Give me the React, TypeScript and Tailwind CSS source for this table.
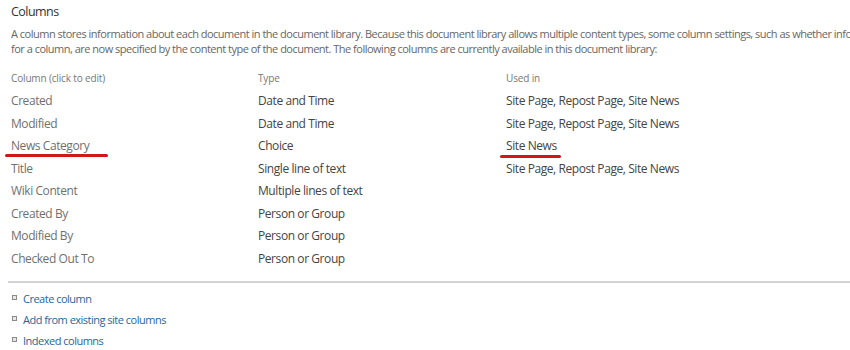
import React from "react";

type Row = { name: string; type: string; usedIn: string; mark?: boolean };

const ROWS: Row[] = [
  { name: "Created", type: "Date and Time", usedIn: "Site Page, Repost Page, Site News" },
  { name: "Modified", type: "Date and Time", usedIn: "Site Page, Repost Page, Site News" },
  { name: "News Category", type: "Choice", usedIn: "Site News", mark: true },
  { name: "Title", type: "Single line of text", usedIn: "Site Page, Repost Page, Site News" },
  { name: "Wiki Content", type: "Multiple lines of text", usedIn: "" },
  { name: "Created By", type: "Person or Group", usedIn: "" },
  { name: "Modified By", type: "Person or Group", usedIn: "" },
  { name: "Checked Out To", type: "Person or Group", usedIn: "" },
];

const LINKS = ["Create column", "Add from existing site columns", "Indexed columns"];

function Bullet() {
  return (
    <span className="inline-block w-[5px] h-[5px] border border-[#8a8a8a] bg-[#e8e8e8] mt-[4px] shrink-0" />
  );
}

export default function App() {
  return (
    <div
      className="w-[850px] h-[350px] overflow-hidden bg-white"
      style={{ fontFamily: '"Open Sans", "Noto Sans", sans-serif' }}
    >
      <div className="pl-[11px]">
        <h2 className="pt-[4px] text-[12.5px] leading-[16px] tracking-[-0.55px] text-[#333333]">Columns</h2>
        <div className="mt-[6px] text-[11px] leading-[15px] tracking-[-0.5px] text-[#666666] whitespace-nowrap overflow-hidden">
          <p>
            A column stores information about each document in the document library. Because this
            document library allows multiple content types, some column settings, such as whether information
          </p>
          <p>
            for a column, are now specified by the content type of the document. The following columns are
            currently available in this document library:
          </p>
        </div>

        <div className="mt-[14px] grid grid-cols-[247px_248px_1fr] text-[10px] leading-[16px] tracking-[-0.15px] text-[#777777]">
          <span>Column (click to edit)</span>
          <span>Type</span>
          <span>Used in</span>
        </div>

        <div className="mt-[4px]">
          {ROWS.map((r) => (
            <div
              key={r.name}
              className="grid grid-cols-[247px_248px_1fr] h-[22.5px] items-center text-[12px] leading-[16px] tracking-[-0.42px]"
            >
              <span className="relative text-[#707070]">
                {r.name}
                {r.mark && (
                  <span className="absolute left-[-6px] top-[16px] w-[103px] h-[2.5px] bg-[#d01818] rounded-full" />
                )}
              </span>
              <span className="text-[#444444]">{r.type}</span>
              <span className="relative text-[#444444]">
                {r.usedIn}
                {r.mark && (
                  <span className="absolute left-[-6px] top-[17px] w-[61px] h-[2.5px] bg-[#d01818] rounded-full" />
                )}
              </span>
            </div>
          ))}
        </div>
      </div>

      <div className="ml-[8px] mt-[11px] h-[2px] bg-[#d4d4d4]" />

      <ul className="mt-[8px] pl-[12px]">
        {LINKS.map((l) => (
          <li key={l} className="flex gap-[6px] h-[21px] leading-[15px] text-[11px] tracking-[-0.5px] text-[#24679e]">
            <Bullet />
            <span>{l}</span>
          </li>
        ))}
      </ul>
    </div>
  );
}
